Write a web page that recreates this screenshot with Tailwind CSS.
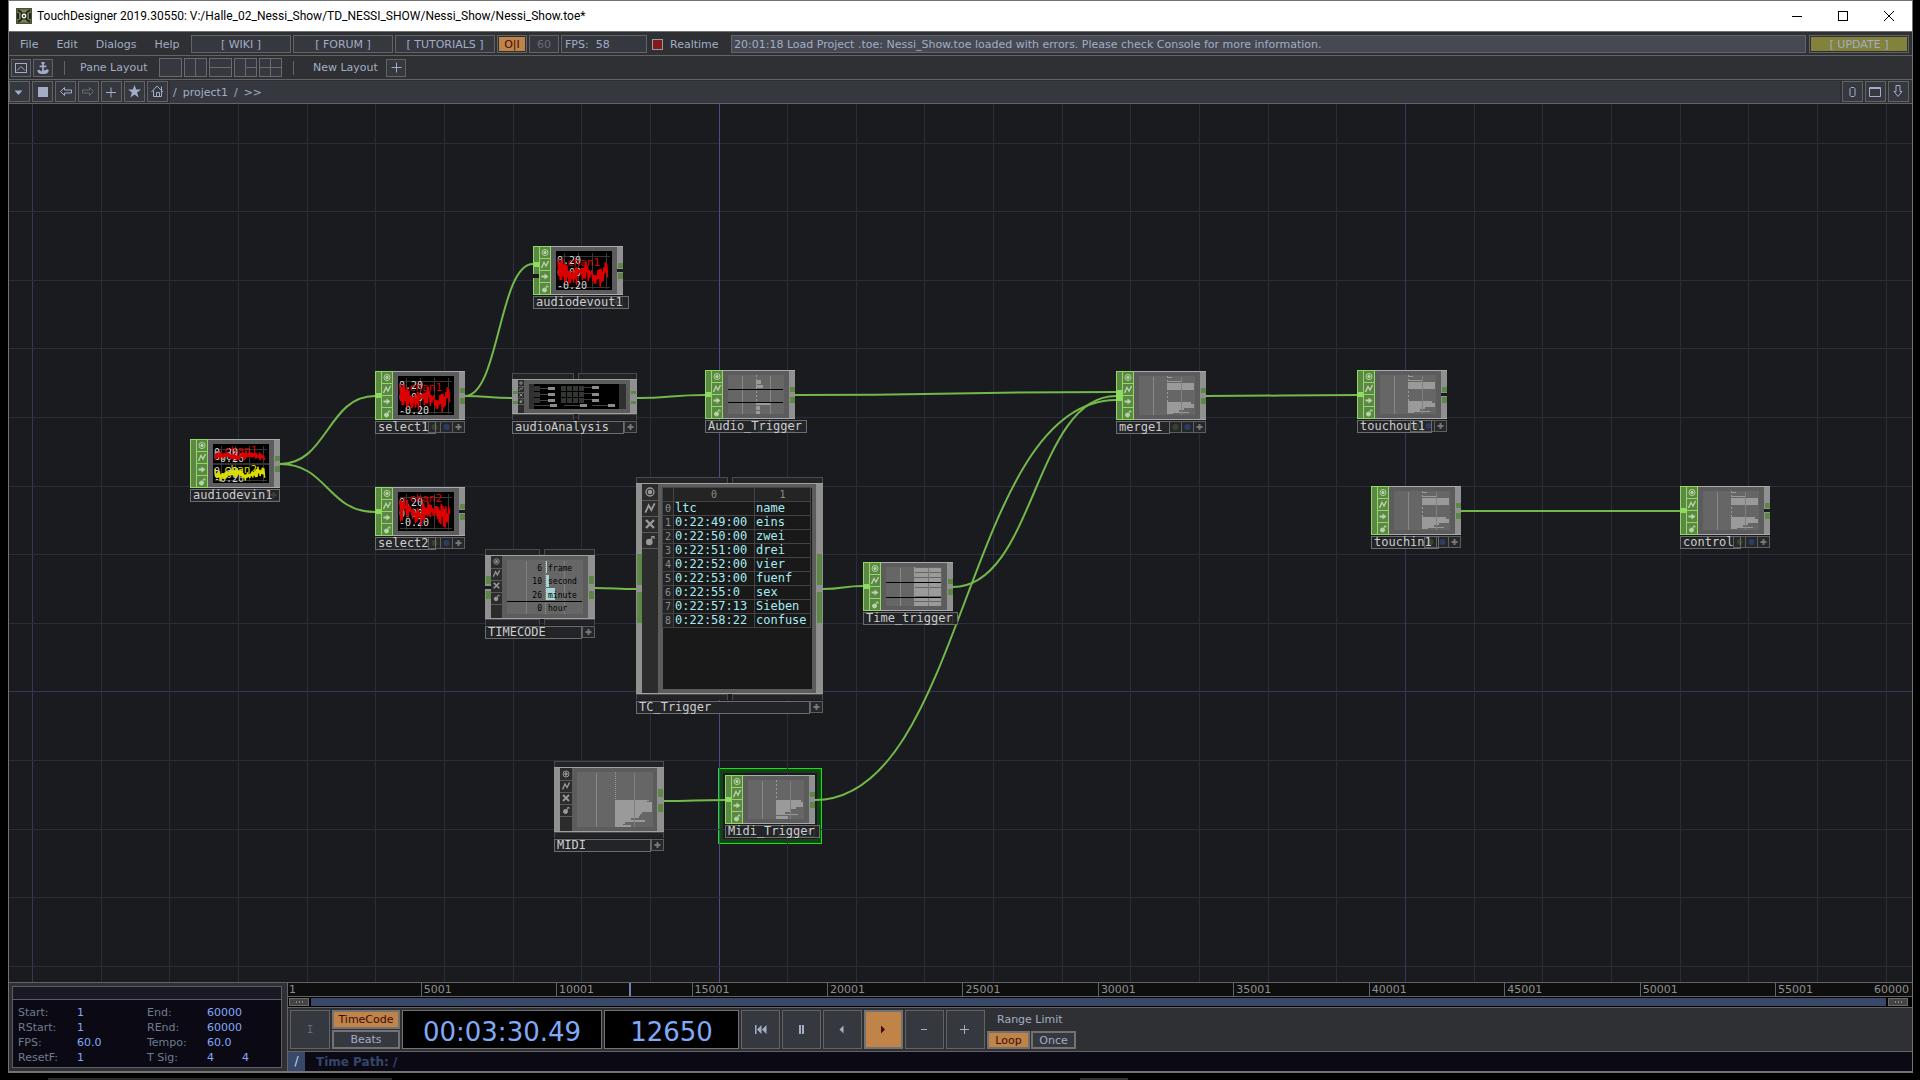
<!DOCTYPE html>
<html lang="en">
<head>
<meta charset="utf-8">
<title>TouchDesigner</title>
<script src="https://cdn.jsdelivr.net/npm/@tailwindcss/browser@4"></script>
</head>
<body class="bg-black">
<div class="flex h-screen flex-col bg-black font-['DejaVu_Sans',sans-serif] text-[11px] leading-4 text-[#a3adc6]">
<div class="mr-[7px] ml-2 flex min-h-0 flex-1 flex-col border border-b-2 border-[#737373] bg-[#2f3033]">

  <header class="flex h-[31px] shrink-0 items-center border-b border-[#737373] bg-white pr-[18px] pl-[7px] text-black">
    <svg class="mr-[5px] size-4" viewBox="0 0 16 16"><rect width="16" height="16" fill="#4b5238"/><rect x="1.500" y="1.500" width="13" height="13" fill="#7b8559"/><path d="M2 2l4 3M14 2l-4 3M2 14l4-3M14 14l-4-3M2 5v6M14 5v6" stroke="#20251a" stroke-width="2"/><circle cx="8" cy="8" r="3.600" fill="#20251a"/><circle cx="8" cy="8" r="2.400" fill="#fff"/><circle cx="8" cy="8" r="1" fill="#20251a"/></svg>
    <h1 class="font-['Roboto',sans-serif] text-xs">TouchDesigner 2019.30550: V:/Halle_02_Nessi_Show/TD_NESSI_SHOW/Nessi_Show/Nessi_Show.toe*</h1>
    <div class="ml-auto flex gap-9">
      <button aria-label="Minimize"><svg class="size-[10px]" viewBox="0 0 10 10"><path d="M0 5.500h10" stroke="#000"/></svg></button>
      <button aria-label="Maximize"><svg class="size-[10px]" viewBox="0 0 10 10"><rect x=".5" y=".5" width="9" height="9" fill="none" stroke="#000"/></svg></button>
      <button aria-label="Close"><svg class="size-[10px]" viewBox="0 0 10 10"><path d="M0 0l10 10M10 0L0 10" stroke="#000"/></svg></button>
    </div>
  </header>

  <nav class="flex h-6 shrink-0 items-center border-b border-[#636366] pt-px pr-[3px] pl-[11px] leading-[17px]">
    <div class="flex w-[171px] gap-[18px]">
      <button>File</button><button>Edit</button><button>Dialogs</button><button>Help</button>
    </div>
    <div class="flex flex-1 items-center gap-0.5">
      <button class="h-[18px] w-[100px] border border-[#636366] bg-[#363840]">[ WIKI ]</button>
      <button class="h-[18px] w-[100px] border border-[#636366] bg-[#363840]">[ FORUM ]</button>
      <button class="h-[18px] w-[100px] border border-[#636366] bg-[#363840]">[ TUTORIALS ]</button>
      <button class="h-[18px] w-[30px] border border-[#636366] p-px leading-[15px] text-[#3d0c08]"><span class="block h-[14px] bg-[#c08348]">O|I</span></button>
      <button class="h-[18px] w-[30px] border border-[#636366] bg-[#363840] text-[#696b72]">60</button>
      <div class="h-[18px] w-[86px] border border-[#636366] bg-[#363840] pl-[3px] whitespace-pre">FPS:  58</div>
      <label class="ml-[3px] flex w-[77px] items-center gap-[7px]"><input type="checkbox" checked class="h-[11px] w-[11px] appearance-none border border-[#9a9aa0] bg-[#84191c]">Realtime</label>
      <div class="mr-px h-[18px] flex-1 border border-[#606470] bg-[#464951] pl-0.5">20:01:18 Load Project .toe: Nessi_Show.toe loaded with errors. Please check Console for more information.</div>
      <button class="h-[18px] w-[100px] border border-[#636366] p-px leading-[15px]"><span class="block h-[14px] bg-[#82823c]">[ UPDATE ]</span></button>
    </div>
  </nav>

  <div class="flex h-6 shrink-0 items-center border-b border-[#636366] pl-0.5 leading-[18px]">
    <button class="grid h-[18px] w-5 place-items-center border border-[#636366] bg-[#363840]" aria-label="Pane"><svg class="size-3" viewBox="0 0 12 12" fill="none" stroke="#a3adc6"><rect x=".5" y="1.500" width="11" height="9"/><path d="M2 8.500l4-4 4 4"/></svg></button>
    <button class="ml-0.5 grid h-[18px] w-5 place-items-center border border-[#636366] bg-[#363840]" aria-label="Palette"><svg class="size-3" viewBox="0 0 14 14" fill="#a3adc6"><path d="M5 0h4v2H8v2h3v2H8v4l3-1V8l3 2-2 3-3 1H5l-3-1-2-3 3-1 2 2 1-1V6H3V4h3V2H5z"/></svg></button>
    <span class="ml-[11px] h-[14px] w-px bg-[#636366]"></span>
    <span class="ml-[15px] w-[79px]">Pane Layout</span>
    <div id="layouts" class="flex gap-0.5"></div>
    <span class="ml-[11px] h-[14px] w-px bg-[#636366]"></span>
    <span class="ml-[19px] w-[73px]">New Layout</span>
    <button class="grid h-[18px] w-5 place-items-center border border-[#636366] bg-[#363840]" aria-label="Add layout"><svg class="size-[11px]" viewBox="0 0 11 11"><path d="M.5 5.500h10M5.500.5v10" stroke="#a3adc6"/></svg></button>
  </div>

  <div class="flex h-6 shrink-0 items-center gap-0.5 border-b border-[#636366] pr-[3px]">
    <div id="pathButtons" class="flex gap-0.5"></div>
    <div class="flex h-[22px] flex-1 gap-1.5 bg-[#363840] pl-[3px] leading-6"><span>/</span><a href="#">project1</a><span>/</span><span>&gt;&gt;</span></div>
    <div id="paneButtons" class="flex gap-0.5"></div>
  </div>

  <main id="canvas" class="relative min-h-0 flex-1 overflow-hidden bg-[#1a1b1f] font-['DejaVu_Sans_Mono',monospace] text-[#cdcdcd]">
    <div class="absolute top-[664px] left-[709px] h-[76px] w-[104px] border border-[#00f000] bg-[#154018] p-1"><div class="size-full bg-[#1a1b1f]"></div></div>
    <svg id="wires" class="absolute inset-0 size-full" fill="none"></svg>
  </main>

  <footer class="flex shrink-0 border-t border-[#636366]">
    <section class="w-[279px] shrink-0 border-r border-[#636366] p-[3px] pr-[5px]">
      <div class="flex h-[82px] flex-col border border-[#5b5c68] bg-[#0b0a14]">
        <div class="h-[13px] shrink-0 border-b border-[#5b5c68] bg-[#191a23]"></div>
        <dl class="grid grid-cols-[59px_70px_60px_35px_1fr] pt-[5px] pl-[5px] leading-[15px] text-[#6f7c8e] [&_dd]:text-[#82a9f8]">
          <dt>Start:</dt><dd>1</dd><dt>End:</dt><dd class="col-span-2">60000</dd>
          <dt>RStart:</dt><dd>1</dd><dt>REnd:</dt><dd class="col-span-2">60000</dd>
          <dt>FPS:</dt><dd>60.0</dd><dt>Tempo:</dt><dd class="col-span-2">60.0</dd>
          <dt>ResetF:</dt><dd>1</dd><dt>T Sig:</dt><dd>4</dd><dd>4</dd>
        </dl>
      </div>
    </section>
    <section class="min-w-0 flex-1">
      <div id="ruler" class="relative h-[14px] border-b border-[#636366] bg-[#0e0e0e] leading-[13px] text-[#8f8f8f]"></div>
      <div class="flex h-[11px] items-center gap-0.5 border-b border-[#636366] bg-black pr-1 pl-px">
        <span class="flex h-2 w-5 items-center justify-center gap-0.5 border border-[#6a6a6a] bg-[#444]"><i class="h-0.5 w-px bg-[#888]"></i><i class="h-0.5 w-px bg-[#888]"></i><i class="h-0.5 w-px bg-[#888]"></i></span>
        <span class="h-2 flex-1 bg-[#374869]"></span>
        <span class="flex h-2 w-5 items-center justify-center gap-0.5 border border-[#6a6a6a] bg-[#444]"><i class="h-0.5 w-px bg-[#888]"></i><i class="h-0.5 w-px bg-[#888]"></i><i class="h-0.5 w-px bg-[#888]"></i></span>
      </div>
      <div class="flex h-11 items-center gap-0.5 border-b border-[#636366] pl-0.5">
        <button class="grid h-[39px] w-10 place-items-center border border-[#636366] bg-[#363840] font-['DejaVu_Sans_Mono',monospace] text-[#696b72]">I</button>
        <div class="flex w-[68px] flex-col gap-px">
          <button class="h-[19px] border-2 border-[#727272] bg-[#c08348] leading-4 text-[#3d0c08]">TimeCode</button>
          <button class="h-[19px] border-2 border-[#727272] bg-[#363840] leading-4">Beats</button>
        </div>
        <output class="h-[39px] w-[200px] border border-[#727272] bg-black text-center text-[26px] leading-[42px] text-[#82a9f8]">00:03:30.49</output>
        <output class="h-[39px] w-[135px] border border-[#727272] bg-black text-center text-[26px] leading-[42px] text-[#82a9f8]">12650</output>
        <div id="transport" class="flex gap-0.5"></div>
        <div class="flex h-[39px] flex-col justify-between">
          <span class="pl-2.5 leading-5">Range Limit</span>
          <div class="flex gap-px"><button class="h-[18px] w-[43px] border-2 border-[#727272] bg-[#c08348] leading-4 text-[#3d0c08]">Loop</button><button class="h-[18px] w-[45px] border-2 border-[#727272] bg-[#363840] leading-4">Once</button></div>
        </div>
      </div>
      <div class="flex h-[19px] items-center bg-[#0b0a14] text-xs font-bold text-[#36456b]">
        <span class="mr-[11px] h-[19px] w-[17px] bg-[#374869] text-center leading-[19px] font-normal text-[#cfd6e6]">/</span>Time Path: /
      </div>
    </section>
  </footer>
</div>
<div class="flex h-[7px] items-end">
  <span class="ml-12 h-0.5 w-[344px] bg-[#2c2c2c]"></span><span class="ml-[688px] h-0.5 w-12 bg-[#333]"></span>
</div>
</div>

<script>
const byId = id => document.getElementById(id);
const ink = '#a3adc6';

// Pane layout presets
byId('layouts').innerHTML = ['', 'M11.500 0v19', 'M0 9.500h23', 'M11.500 0v19M11.500 9.500h12', 'M11.500 0v19M0 9.500h23'].map(d =>
  `<button class="h-[19px] w-[23px] bg-[#363840]" aria-label="Layout"><svg class="h-[19px] w-[23px]" viewBox="0 0 23 19" fill="none" stroke="#6a6a6e"><rect x=".5" y=".5" width="22" height="18"/><path d="${d}"/></svg></button>`).join('');

const iconButton = g => `<button class="grid h-[21px] w-[21px] place-items-center border border-[#636366] bg-[#363840]" aria-label="Tool"><svg class="size-[15px]" viewBox="0 0 15 15" fill="none" stroke="${ink}">${g}</svg></button>`;
byId('pathButtons').innerHTML = [
  `<path d="M2.500 6.500h8L6.500 11z" fill="${ink}" stroke="none"/>`,
  `<path d="M3 3h10v10H3z" fill="${ink}" stroke="none"/>`,
  '<path d="M2.500 7.500l4-4v2.500h7v3h-7v2.500z"/>',
  '<path d="M12.500 7.500l-4-4v2.500h-7v3h7v2.500z" stroke="#696b72"/>',
  '<path d="M2 8.500h10M7 3.500v10"/>',
  `<path d="M7.500 1l1.700 4.600h4.800l-3.900 3 1.500 5-4.100-3-4.100 3 1.500-5-3.900-3h4.800z" fill="${ink}" stroke="none"/>`,
  '<path d="M1.500 8L7 2l6 6M3.500 6.500v6h8v-6M11.500 6V2.500M6.500 12.500v-4h3v4"/>'
].map(iconButton).join('');
byId('paneButtons').innerHTML = [
  '<path d="M6 3.500h3l1 1v7l-1 1H6l-1-1v-7z"/>',
  '<path d="M1.500 3.500h11v9h-11zM1 4.500h12"/>',
  '<path d="M5 1.500h4v6h2l-4 5-4-5h2z"/>'
].map(iconButton).join('');

// Transport controls
byId('transport').innerHTML = [
  ['First frame', '<path d="M2 3h1.500v9H2zM8.500 3v9L4 7.500zM13.500 3v9L9 7.500z"/>'],
  ['Pause', '<path d="M5 3h2v9H5zM8 3h2v9H8z"/>'],
  ['Play backward', '<path d="M8.500 3.500v8L4.500 7.500z"/>'],
  ['Play', '<path d="M5 3.500v8l4-4z"/>'],
  ['Slower', '<path d="M4 7h6v1H4z"/>'],
  ['Faster', '<path d="M2 7h4V3h1v4h4v1H7v4H6V8H2z"/>']
].map(([n, g]) => n === 'Play'
  ? `<button class="grid h-[39px] w-[39px] place-items-center border-2 border-[#727272] bg-[#c08348]" aria-label="Play"><svg class="size-[15px]" viewBox="0 0 15 15" fill="#3d0c08">${g}</svg></button>`
  : `<button class="grid h-[39px] w-[39px] place-items-center border border-[#636366] bg-[#363840]" aria-label="${n}"><svg class="size-[15px]" viewBox="0 0 15 15" fill="${ink}">${g}</svg></button>`).join('');

// Timeline ruler
let ruler = '<span class="absolute left-px top-0">1</span>';
for (let k = 1; k < 12; k++) ruler += `<span class="absolute top-0 h-[13px] border-l border-[#636366] pl-0.5" style="left:${k * 8.34 - .17}%">${k * 5000 + 1}</span>`;
byId('ruler').innerHTML = ruler + '<span class="absolute top-0 right-[3px]">60000</span><span class="absolute top-0 h-[13px] w-0.5 bg-[#6b83b8]" style="left:21%"></span>';

// Network grid and wires; X0/Y0 are the canvas origin
const X0 = 9, Y0 = 104;
let g = '';
for (let k = 0; k < 60; k++) {
  const x = Math.round(32 - X0 + k * 68.65) + .5, y = Math.round(142.6 - Y0 + k * 68.6) + .5;
  g += `<path d="M${x} 0v4000" stroke="${k === 10 ? '#4c4b85' : k % 10 === 0 ? '#37365c' : '#2d2c3c'}"/><path d="M0 ${y}h6000" stroke="${k === 8 ? '#35355a' : '#2d2c3c'}"/>`;
}
for (const [x1, y1, x2, y2] of [
  [280, 464, 375, 396], [280, 464, 375, 512], [465, 396, 533, 264], [465, 396, 512, 398], [637, 398, 705, 395],
  [795, 395, 1116, 392], [595, 588, 636, 589], [823, 589, 863, 586], [953, 587, 1116, 396], [815, 800, 1116, 400],
  [1206, 396, 1357, 395], [1461, 511, 1680, 511], [664, 801, 725, 800]]) {
  const a = x1 - X0, b = y1 - Y0, c = x2 - X0, d = y2 - Y0, m = (a + c) / 2;
  g += `<path d="M${a} ${b}C${m} ${b} ${m} ${d} ${c} ${d}" stroke="#73b84a" stroke-width="2"/>`;
}
byId('wires').innerHTML = g;

const R = (x, y, w, h, f) => `<rect x="${x}" y="${y}" width="${w}" height="${h}" fill="${f}"/>`;
// Operator flags: viewer, clone, export / bypass, lock
const glyphs = cross => [
  '<circle cx="6" cy="6" r="3" fill="none"/><circle cx="6" cy="6" r="1.200"/>',
  '<path d="M2.500 9.500L5 4l2 3.500L9.500 2.500" fill="none" stroke-width="1.400"/>',
  cross ? '<path d="M3 3l6 6M9 3l-6 6" stroke-width="1.800"/>' : '<path d="M2.500 5h3v-2l4 3-4 3v-2h-3z" stroke="none"/>',
  '<circle cx="5.500" cy="7.500" r="2" /><path d="M7 6l.5-2.500 1.500 0v1.500" fill="none"/>'];

function wave(base, amp, color, name, seed, nx, ny) {
  let s = seed * 7919, p = '';
  const rnd = () => (s = (s * 16807) % 2147483647) / 2147483647;
  for (let i = 0; i < 6; i++) rnd();
  for (let i = 0; i < 68; i++) {
    const x = 2 + i * .74, env = .5 + .5 * Math.abs(Math.sin(x / 7 + 1));
    p += `${x.toFixed(1)} ${(base - Math.sin(x / 4 + seed) * amp * .3 + (i % 2 ? 1 : -1) * rnd() * amp * env).toFixed(1)} `;
  }
  return `<polyline points="${p}" fill="none" stroke="${color}" stroke-width="1.500"/><text x="${nx}" y="${ny}" font-size="11" fill="${color}">${name}</text>`;
}
const scale = (ys, size) => ['0.20', '0.00', '-0.20'].map((t, i) => `<text x="1" y="${ys[i]}" font-size="${size}" fill="#d8d8d8">${t}</text>`).join('');
const waveGrid = '<path d="M8.500 2v36M22.500 2v36M36.500 2v36M50.500 2v36M2 5.500h52M2 36.500h52" stroke="#383838"/>';
const plot = R(0, 0, 56, 39, '#666') + R(14, 1, 1, 38, '#888') + R(42, 1, 1, 38, '#888') + '<path d="M28.500 0v39" stroke="#999" stroke-dasharray="2 2"/>';
const bar = (x, y, w, h) => R(x, y, w, h, '#9a9a9a');
const views = {
  wave1: R(0, 0, 56, 39, '#000') + waveGrid + scale([13, 25, 38], 10) + wave(22, 13, '#dc0000', 'chan1', 7, 11, 15),
  wave2: R(0, 0, 56, 39, '#000') + waveGrid + scale([14, 25, 34], 10) + wave(20, 13, '#dc0000', 'chan2', 31, 11, 10),
  dual: R(0, 0, 56, 39, '#000') + waveGrid + R(0, 19, 56, 2, '#333') + scale([12, 16, 18], 10) + scale([31, 34, 38], 10) + wave(12, 5, '#dc0000', 'chan1', 5, 11, 10) + wave(30, 6, '#dcdc00', 'chan2', 9, 11, 29),
  merge: plot + bar(28, 1, 5, 1) + bar(28, 5, 14, 1) + bar(28, 7, 27, 7) + bar(28, 26, 24, 2) + bar(28, 28, 27, 4) + bar(28, 32, 17, 2) + bar(28, 34, 12, 2) + bar(28, 36, 22, 1) + bar(28, 37, 6, 1) + R(42, 1, 1, 38, '#808080'),
  audio: plot + bar(28, 5, 5, 4) + bar(28, 10, 7, 3) + R(0, 14, 55, 1, '#000') + R(0, 27, 55, 1, '#000') + bar(28, 28, 14, 2) + bar(28, 31, 4, 4) + bar(28, 36, 4, 3),
  time: plot + [1, 6, 11, 16, 21, 25, 30, 35].map(y => bar(28, y, 27, 4)).join('') + R(42, 1, 1, 38, '#777') + R(0, 15, 55, 1, '#000') + R(0, 30, 55, 1, '#000'),
  midi: plot + bar(28, 20, 25, 2) + bar(28, 22, 27, 5) + bar(28, 27, 20, 2) + bar(28, 29, 15, 3) + bar(28, 32, 9, 2) + bar(28, 34, 22, 1) + bar(28, 36, 12, 3) + R(42, 1, 1, 38, '#808080')
};
const midiPanel = R(0, 0, 76, 55, '#666') + R(19, 1, 1, 54, '#888') + '<path d="M38.500 0v55" stroke="#999" stroke-dasharray="1 1"/>' +
  [[28, 34, 1], [29, 32, 1], [30, 37, 10], [40, 27, 2], [42, 25, 2], [44, 24, 2], [46, 16, 2], [48, 30, 2], [50, 10, 2], [52, 8, 1], [53, 16, 2]].map(([y, w, h]) => bar(38, y, w, h)).join('') + R(57, 1, 1, 54, '#808080');

const flagBox = g => `<span class="-mr-px h-3 w-[13px] border border-[#5e5e5e] bg-[#262729] last:mr-0"><svg class="block size-full" viewBox="0 0 11 10">${g}</svg></span>`;
const plus = '<path d="M5.500 2v6M2.500 5h6" stroke="#777" stroke-width="2"/>';

// Small operator: x, y, name, label width, view, input mode, output wired
function chop([x, y, name, lw, view, input, wired]) {
  let s = '';
  const inY = input === 'upper' ? 16 : 22;
  s += R(0, 0, 18, 49, '#8fdb62') + R(1, 1, 5, 47, '#5c8744');
  if (input === 'upper') s += R(0, 28, 6, 4, '#1a1b1f');
  if (input === 'merge') s += R(0, 19, 6, 11, '#8fdb62');
  else if (input) s += R(0, inY, 6, 5, '#8fdb62');
  glyphs(false).forEach((p, i) => s += R(7, 1 + i * 12, 10, 11, '#5c8744') + `<g transform="translate(6 ${i * 12 + .5})" fill="#b5d6a4" stroke="#b5d6a4">${p}</g>`);
  s += R(18, 0, 72, 49, '#aba9b0') + R(18, 1, 66, 47, '#5c5c5c') + R(84, 1, 6, 47, '#909090') + R(85, 17, 5, 5, '#5c8744') + R(85, 27, 5, 6, '#5c8744');
  if (!wired) s += R(84, 23, 6, 3, '#1a1b1f');
  s += `<svg x="23" y="5" width="56" height="39">${views[view]}</svg>`;
  const dim = lw >= 90 ? 'opacity-30' : 'opacity-100';
  return `<div class="absolute" style="left:${x - X0}px;top:${y - Y0}px"><svg class="block h-[49px] w-[90px]">${s}</svg>
    <div class="relative mt-px h-[13px] w-[90px]">
      <div class="h-[13px] bg-[#232427]" style="width:${lw}px"></div>
      <div class="absolute top-0 right-0 flex ${dim}">${flagBox('<circle cx="5.500" cy="5" r="3" fill="#36432f"/>')}${flagBox('<circle cx="5.500" cy="5" r="3" fill="#2c3d63"/>')}${flagBox(plus)}</div>
      <div class="absolute top-0 left-0 h-[13px] border border-[#6c6c6c] pl-0.5 text-xs leading-[11px] whitespace-nowrap" style="width:${lw}px">${name}</div>
    </div></div>`;
}

// Component: body box plus its connector tabs, flag column and name
function comp({ x, y, w, h, name, col, step, split, conn, grow, svg, html, inGap, inOpen }) {
  const H = h + 12, left = split || 0;
  let s = '';
  for (const ty of [0, h + 6]) {
    const tab = (a, b) => `<rect x="${a + .5}" y="${ty + .5}" width="${b - a - 1}" height="6" fill="#222326" stroke="#4b4b4d"/>`;
    s += left ? tab(0, left) + tab(left + 4, w) : tab(0, w);
  }
  s += R(0, 6, w, h, '#a0a0a0') + R(0, 7, 6, h - 2, '#909090') + R(6, 7, col, h - 2, '#2c2c2c') + R(6 + col, 7, w - col - 13, h - 2, '#5c5c5c') + R(w - 7, 7, 7, h - 2, '#909090');
  glyphs(true).forEach((p, i) => s += `<g transform="translate(6 ${7 + i * step}) scale(${col / 12})" fill="#999" stroke="#999">${p}</g>` + R(6, 7 + (i + 1) * step, col, 1, '#5a5a5a'));
  s += R(w - 6, conn - grow - 3, 5, grow, '#5c8744') + R(w - 6, conn + 4, 5, grow, '#5c8744');
  if (inOpen) s += R(1, conn - grow - 3, 5, grow, '#5c8744') + R(1, conn + 4, 5, grow, '#5c8744');
  if (inGap) s += R(0, conn - 1, 6, 3, '#1a1b1f');
  const vx = 11 + col;
  s += `<svg x="${vx}" y="11" width="${w - vx - 11}" height="${h - 10}">${svg}</svg>`;
  return `<div class="absolute" style="left:${x - X0}px;top:${y - Y0}px;width:${w}px"><svg class="block w-full" height="${H}">${s}</svg>${html || ''}
    <div class="mt-px flex"><div class="h-[13px] flex-1 border border-[#6c6c6c] bg-[#232427] pl-0.5 text-xs leading-[11px]">${name}</div>${flagBox(plus)}</div></div>`;
}

let tc = R(0, 0, 76, 54, '#666') + R(19, 1, 1, 53, '#808080') + R(57, 1, 1, 53, '#808080') + '<path d="M38.500 1v53" stroke="#999" stroke-dasharray="1 1"/>' + R(39, 1, 1, 12, '#a8d5d5') + R(39, 15, 3, 12, '#a8d5d5') + R(39, 28, 9, 12, '#a8d5d5') + R(0, 41, 75, 1, '#000');
[['6', 'frame', 11], ['10', 'second', 24], ['26', 'minute', 38], ['0', 'hour', 51]].forEach(([n, t, y]) =>
  tc += `<text x="35" y="${y}" font-size="8" text-anchor="end" fill="#000">${n}</text><text x="41" y="${y}" font-size="8" fill="#000">${t}</text>`);

let an = R(0, 0, 97, 25, '#303030') + R(5, 0, 85, 25, '#000');
for (const y of [2, 8, 14]) {
  an += R(5, y, 6, 5, '#333') + R(11, y + 2, 8, 1, '#444') + R(19, y + 1, 7, 3, '#8c8c8c') + R(54, y + 1, 9, 1, '#3a3a3a') + R(63, y + (y > 2 ? 1 : 0), 7, 3, '#8c8c8c');
  for (let i = 0; i < 4; i++) an += R(32 + i * 6, y, 5, 5, '#333633');
}
for (const x of [5, 35, 63]) an += R(x, 21, 17, 1, '#444') + R(x + 16, 20, 7, 3, '#8c8c8c');

const rows = [['ltc', 'name'], ['0:22:49:00', 'eins'], ['0:22:50:00', 'zwei'], ['0:22:51:00', 'drei'], ['0:22:52:00', 'vier'], ['0:22:53:00', 'fuenf'], ['0:22:55:0', 'sex'], ['0:22:57:13', 'Sieben'], ['0:22:58:22', 'confuse']];
const table = `<table class="absolute top-[10px] left-[26px] w-[149px] table-fixed border-collapse text-xs leading-[13px] text-[#a6ecf4]">
  <thead class="bg-[#242424] text-[10px] text-[#8c8c8c]"><tr class="h-[14px]"><th class="w-[11px] border border-[#444] p-0"></th><th class="w-[81px] border border-[#444] p-0 font-normal">0</th><th class="border border-[#444] p-0 font-normal">1</th></tr></thead>
  <tbody>${rows.map((r, i) => `<tr class="h-[14px]"><th class="border border-[#444] bg-[#242424] p-0 text-[10px] font-normal text-[#8c8c8c]">${i}</th><td class="border border-[#444] p-0 pl-px">${r[0]}</td><td class="border border-[#444] p-0 pl-px">${r[1]}</td></tr>`).join('')}</tbody></table>`;

byId('canvas').insertAdjacentHTML('beforeend',
  [
    [190, 439, 'audiodevin1', 90, 'dual', '', true],
    [375, 371, 'select1', 61, 'wave1', 'mid', true],
    [375, 487, 'select2', 61, 'wave2', 'mid', false],
    [533, 246, 'audiodevout1', 96, 'wave1', 'upper', false],
    [705, 370, 'Audio_Trigger', 102, 'audio', 'mid', true],
    [863, 562, 'Time_trigger', 95, 'time', 'mid', true],
    [1116, 371, 'merge1', 54, 'merge', 'merge', true],
    [1357, 370, 'touchout1', 75, 'merge', 'mid', false],
    [1371, 486, 'touchin1', 68, 'merge', '', true],
    [1680, 486, 'control', 61, 'merge', 'mid', false],
    [725, 775, 'Midi_Trigger', 95, 'midi', 'mid', true]
  ].map(chop).join('') +
  comp({ x: 512, y: 373, w: 125, h: 35, name: 'audioAnalysis', col: 6, step: 6, split: 62, conn: 24, grow: 3, inOpen: true, svg: an }) +
  comp({ x: 485, y: 549, w: 110, h: 64, name: 'TIMECODE', col: 11, step: 12, split: 55, conn: 38, grow: 8, inOpen: true, inGap: true, svg: tc }) +
  comp({ x: 636, y: 477, w: 187, h: 211, name: 'TC_Trigger', col: 16, step: 16, split: 92, conn: 111, grow: 31, inOpen: true, svg: R(0, 0, 149, 201, '#191919'), html: table }) +
  comp({ x: 554, y: 761, w: 110, h: 65, name: 'MIDI', col: 12, step: 12, split: 0, conn: 39, grow: 8, svg: midiPanel }));
</script>
</body>
</html>
